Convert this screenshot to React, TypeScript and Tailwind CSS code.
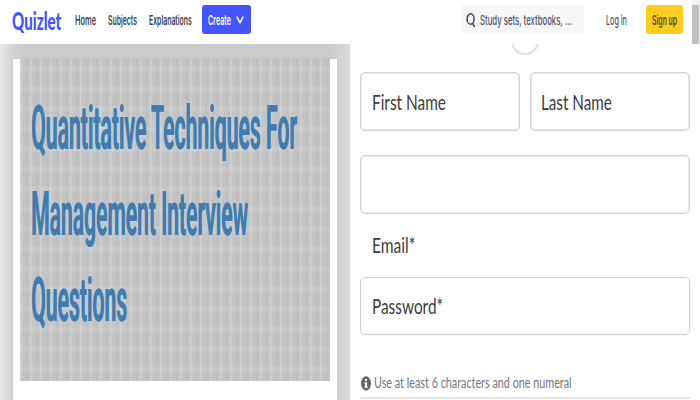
import { useLayoutEffect, useRef, useState } from 'react';

type FitProps = { text: string; width: number; className?: string };

// Sets a single line of text condensed to an exact width.
function Fit({ text, width, className = '' }: FitProps) {
  const ref = useRef<HTMLSpanElement>(null);
  const [scale, setScale] = useState(1);
  useLayoutEffect(() => {
    if (ref.current) setScale(width / ref.current.offsetWidth);
  }, [text, width]);
  return (
    <span className="block shrink-0" style={{ width }}>
      <span
        ref={ref}
        className={`block w-max origin-left whitespace-nowrap ${className}`}
        style={{ transform: `scaleX(${scale})` }}
      >
        {text}
      </span>
    </span>
  );
}

const nav = 'font-[Inter,sans-serif] text-[13px] leading-5 font-semibold text-[#3a3f50]';
const label = 'font-[Lato,sans-serif] text-[21px] leading-7 text-[#3c3c40]';
const heading =
  'font-[Roboto,sans-serif] text-[62px] leading-[86px] font-semibold text-[#437cac] [text-shadow:1.2px_0_currentColor,0_0_6px_#c2dcf0]';
const field =
  'flex h-[59px] items-center rounded-[5px] border border-[#d2d2d2] bg-white shadow-[inset_0_0_0_1px_#eaeaea]';

function Header() {
  return (
    <header className="flex h-11 items-start bg-white">
      <div className="flex h-10 items-center pl-3">
        <Fit
          text="Quizlet"
          width={49}
          className="font-[Lato,sans-serif] text-[25px] leading-8 font-black text-[#4255ff]"
        />
      </div>
      <nav className="flex h-10 items-center gap-3 pl-[14px]">
        <Fit text="Home" width={21} className={nav} />
        <Fit text="Subjects" width={29} className={nav} />
        <Fit text="Explanations" width={43} className={nav} />
      </nav>
      <button className="mt-[5px] ml-[10px] flex h-[29px] w-[49px] items-center rounded-[3px] bg-[#4255ff] pl-[6px]">
        <Fit text="Create" width={23} className="font-[Inter,sans-serif] text-[13px] leading-5 font-semibold text-white" />
        <svg className="ml-[5px] h-2 w-2" viewBox="0 0 8 8" fill="none" stroke="white" strokeWidth="1.5">
          <path d="M.8.6 4 6.6 7.2.6" />
        </svg>
      </button>
      <div className="mt-[5px] ml-auto flex h-[29px] w-[123px] items-center rounded-[4px] bg-[#f6f7fb] pl-[5px]">
        <svg className="h-4 w-[10px]" viewBox="0 0 10 16" fill="none" stroke="#303545" strokeWidth="1.4">
          <ellipse cx="4.6" cy="7" rx="3.5" ry="5.2" />
          <path d="M6.4 11.2 8.8 15" />
        </svg>
        <span className="ml-1">
          <Fit text="Study sets, textbooks, ..." width={92} className="font-[Inter,sans-serif] text-[13px] leading-5 font-medium text-[#50556a]" />
        </span>
      </div>
      <div className="flex h-10 items-center pl-[22px]">
        <Fit text="Log in" width={21} className="font-[Inter,sans-serif] text-[13px] leading-5 font-medium text-[#50556a]" />
      </div>
      <button className="mt-[5px] ml-[19px] flex h-[29px] w-[37px] items-center rounded-[3px] bg-[#ffcd1f] pl-[6px]">
        <Fit text="Sign up" width={25} className="font-[Inter,sans-serif] text-[13px] leading-5 font-semibold text-[#554a28]" />
      </button>
      <div className="ml-[9px] h-11 w-2 bg-[#f3f3f3] pt-[5px]">
        <div className="h-[39px] w-[7px] bg-[#c1c1c1]" />
      </div>
    </header>
  );
}

function Cover() {
  return (
    <section className="w-[350px] shrink-0 bg-[linear-gradient(90deg,#eaeaea_0,#d2d2d2_13px,#cbcbcb_24px,#cbcbcb_330px,#d2d2d2_338px,#dcdcdc_100%)] pt-[15px] pl-[13px]">
      <div className="h-[341px] w-[324px] bg-white px-[7px] shadow-[0_0_2px_#bbb]">
        <div className="h-[322px] bg-[#c4c4c4] bg-[repeating-linear-gradient(90deg,#ffffff30_0_1px,transparent_2px_5px,#00000007_6px_8px,transparent_9px_10px),repeating-linear-gradient(0deg,transparent_0_8px,#ffffff20_11px_13px,transparent_16px_20px)] pt-[26px] pl-[11px]">
          <Fit text="Quantitative Techniques For" width={266} className={heading} />
          <Fit text="Management Interview" width={217} className={heading} />
          <Fit text="Questions" width={96} className={heading} />
        </div>
      </div>
    </section>
  );
}

function SignUpForm() {
  return (
    <section className="flex h-[356px] flex-1 flex-col overflow-hidden bg-[#fefefe] pr-[10px] pl-[10px]">
      <div className="-mt-[17px] h-7 w-7 shrink-0 self-center rounded-full border-2 border-[#e2e2e2]" />
      <div className="mt-[17px] flex justify-between">
        <div className={`${field} w-[160px] pl-[11px]`}>
          <Fit text="First Name" width={74} className={label} />
        </div>
        <div className={`${field} w-[160px] pl-[10px]`}>
          <Fit text="Last Name" width={71} className={label} />
        </div>
      </div>
      <div className={`${field} mt-6`} />
      <div className="mt-[17px] pl-3">
        <Fit text="Email*" width={43} className={label} />
      </div>
      <div className="mt-[18px] flex h-[58px] items-center rounded-[5px] border border-[#cfcfcf] bg-white pl-[11px]">
        <Fit text="Password*" width={71} className={label} />
      </div>
      <div className="mt-[38px] flex h-5 items-center pl-px">
        <svg className="h-[15px] w-[10px]" viewBox="0 0 10 15">
          <ellipse cx="5" cy="7.5" rx="5" ry="7.2" fill="#686872" />
          <path d="M4 3h2v2H4zM3.5 6.3H6v4.2h.8v1.3H3.3v-1.3H4V7.6h-.5z" fill="white" />
        </svg>
        <span className="ml-[3px]">
          <Fit text="Use at least 6 characters and one numeral" width={198} className="font-[Lato,sans-serif] text-[14.5px] leading-5 text-[#777780]" />
        </span>
      </div>
      <div className="mt-1 h-[2px] shrink-0 bg-[#e6e6e6]" />
    </section>
  );
}

export default function App() {
  return (
    <main className="h-[400px] w-[700px] overflow-hidden bg-white">
      <Header />
      <div className="flex h-[356px]">
        <Cover />
        <SignUpForm />
      </div>
    </main>
  );
}
